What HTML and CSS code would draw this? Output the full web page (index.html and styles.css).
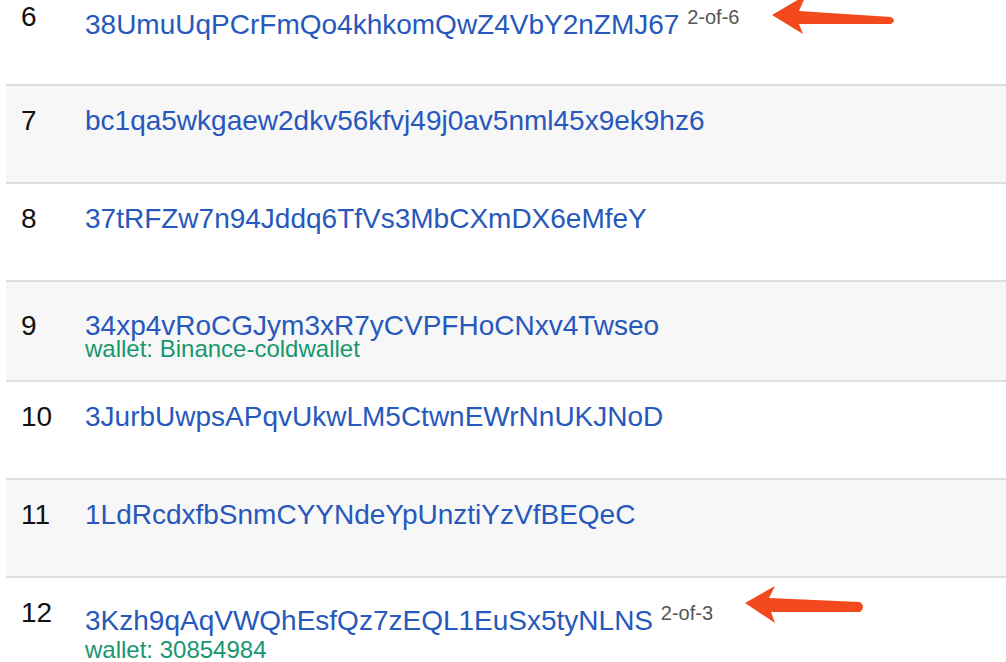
FILE: index.html
```html
<!doctype html>
<html lang="en">
    <head>
        <meta charset="UTF-8" />
        <meta name="viewport" content="width=device-width, initial-scale=1.0" />
        <title>Top addresses</title>
        <link rel="stylesheet" href="styles.css">
    </head>
    <body>
        <div class="addr-list">
            <div class="addr-row">
                <span class="addr-num">6</span>
                <div class="addr-cell">
                    <div class="addr-line"><a class="addr-link" href="#">38UmuUqPCrFmQo4khkomQwZ4VbY2nZMJ67</a> <sup class="sig">2-of-6</sup></div>
                </div>
            </div>
            <div class="addr-row">
                <span class="addr-num">7</span>
                <div class="addr-cell">
                    <div class="addr-line"><a class="addr-link" href="#">bc1qa5wkgaew2dkv56kfvj49j0av5nml45x9ek9hz6</a></div>
                </div>
            </div>
            <div class="addr-row">
                <span class="addr-num">8</span>
                <div class="addr-cell">
                    <div class="addr-line"><a class="addr-link" href="#">37tRFZw7n94Jddq6TfVs3MbCXmDX6eMfeY</a></div>
                </div>
            </div>
            <div class="addr-row is-offset">
                <span class="addr-num">9</span>
                <div class="addr-cell">
                    <div class="addr-line"><a class="addr-link" href="#">34xp4vRoCGJym3xR7yCVPFHoCNxv4Twseo</a></div>
                    <div class="wallet">wallet: Binance-coldwallet</div>
                </div>
            </div>
            <div class="addr-row">
                <span class="addr-num">10</span>
                <div class="addr-cell">
                    <div class="addr-line"><a class="addr-link" href="#">3JurbUwpsAPqvUkwLM5CtwnEWrNnUKJNoD</a></div>
                </div>
            </div>
            <div class="addr-row">
                <span class="addr-num">11</span>
                <div class="addr-cell">
                    <div class="addr-line"><a class="addr-link" href="#">1LdRcdxfbSnmCYYNdeYpUnztiYzVfBEQeC</a></div>
                </div>
            </div>
            <div class="addr-row">
                <span class="addr-num">12</span>
                <div class="addr-cell">
                    <div class="addr-line"><a class="addr-link" href="#">3Kzh9qAqVWQhEsfQz7zEQL1EuSx5tyNLNS</a> <sup class="sig">2-of-3</sup></div>
                    <div class="wallet">wallet: 30854984</div>
                </div>
            </div>
        </div>

        <!-- annotation arrows drawn over the list -->
        <svg class="marks" width="1006" height="662" viewBox="0 0 1006 662">
            <path d="M772,15 L806,-5 L799,11 L891,17 Q897,20.5 891,24 L799,24 L803,34 Z" />
            <path d="M745,603 L775,586 L769,598 L860,602 Q866,607 860,612 L771,612 L775,623 Z" />
        </svg>
    </body>
</html>
```

FILE: styles.css
```css
* {
    box-sizing: border-box;
}

body {
    margin: 0;
    font-family: "Liberation Sans", Arial, sans-serif;
    background: #fff;
    color: #111;
    overflow: hidden;
}

/* list is scrolled: first row is partly above the fold */
.addr-list {
    margin: -18px 0 0 6px;
}

.addr-row {
    display: flex;
    padding: 19px 0 15px;
    border-bottom: 2px solid #dedede;
}

.addr-row:first-child {
    padding-bottom: 21px;
}

.addr-row:nth-child(even) {
    background: #f7f7f7;
}

.addr-row.is-offset {
    padding-top: 28px;
    padding-bottom: 8px;
}

.addr-num {
    flex: none;
    width: 79px;
    padding-left: 15px;
    font-size: 28px;
    line-height: 32px;
}

.addr-cell {
    min-height: 62px;
}

.addr-line {
    font-size: 28px;
    line-height: 32px;
}

.addr-link {
    color: #2758bb;
    text-decoration: none;
}

.sig {
    font-size: 20px;
    color: #555;
}

.wallet {
    font-size: 24px;
    line-height: 26px;
    color: #18976f;
}

.is-offset .wallet {
    margin-top: -6px;
}

.marks {
    position: absolute;
    top: 0;
    left: 0;
    pointer-events: none;
    fill: #f2491d;
}
```
